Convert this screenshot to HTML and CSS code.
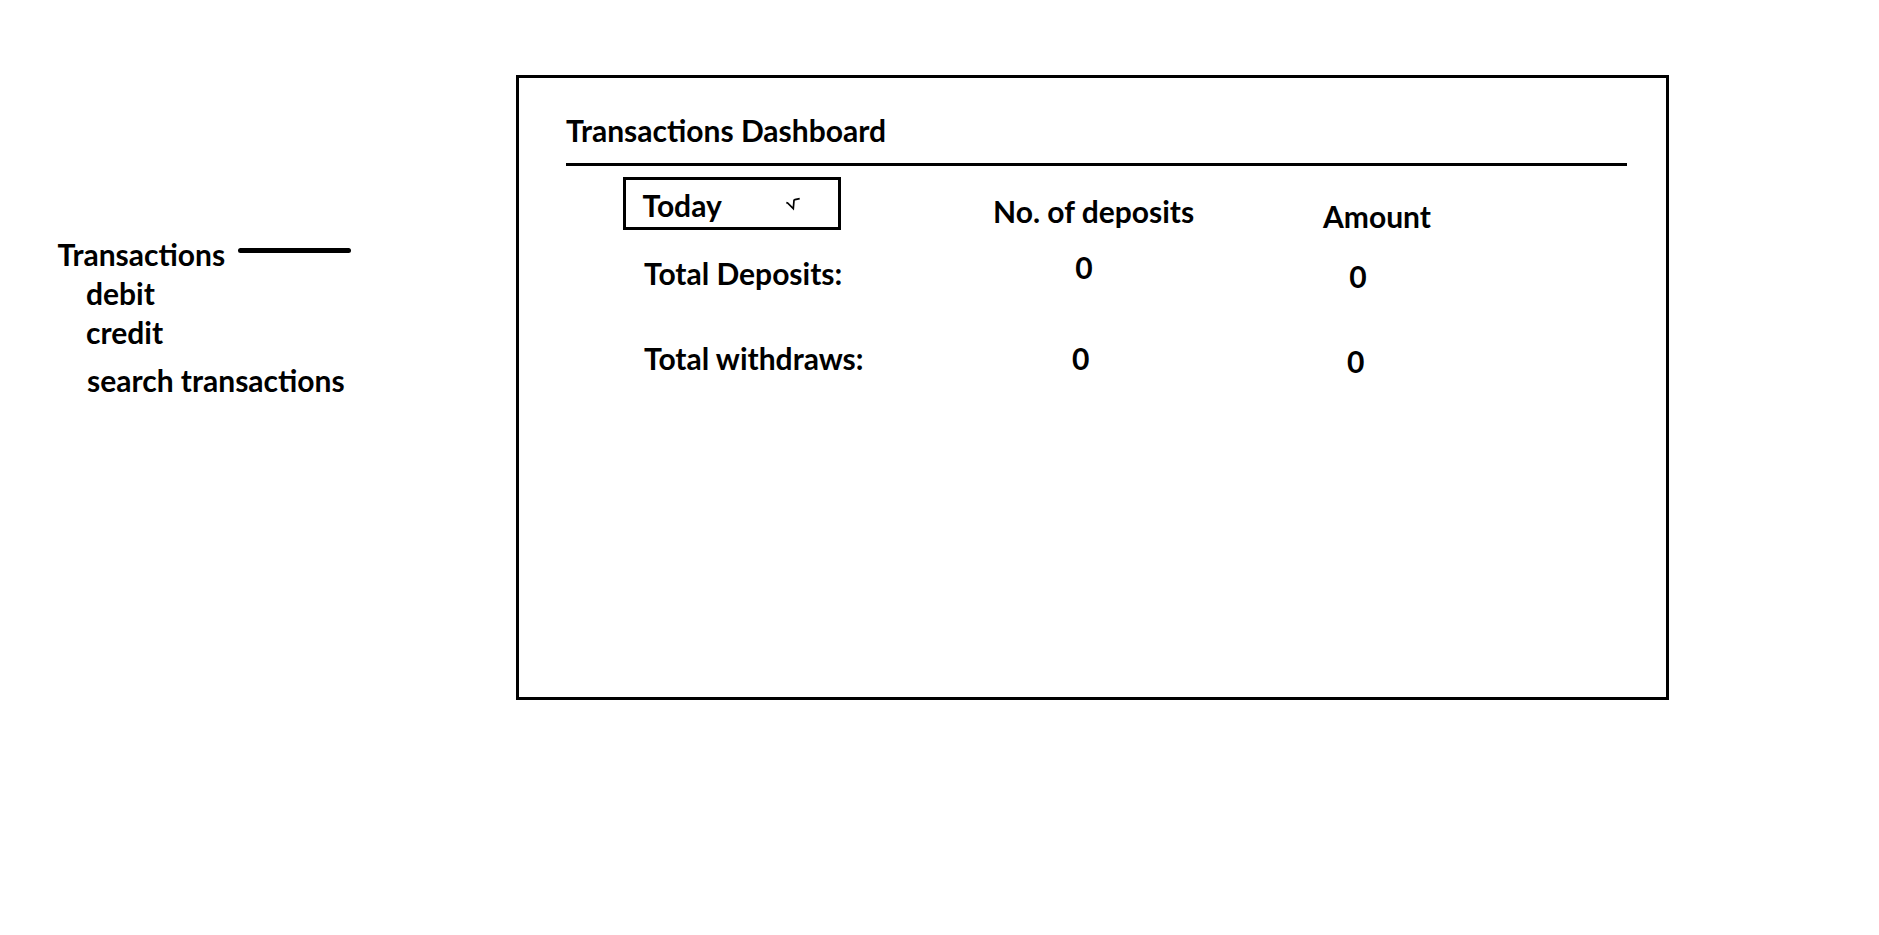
FILE: index.html
```html
<!DOCTYPE html>
<html lang="en">
<head>
<meta charset="utf-8">
<title>Transactions Dashboard</title>
<link rel="stylesheet" href="styles.css">
</head>
<body>
<div class="page">
  <nav class="sidebar">
    <div class="nav-title">
      <span class="nav-heading">Transactions</span>
      <span class="nav-bar"></span>
    </div>
    <div class="nav-item">debit</div>
    <div class="nav-item">credit</div>
    <div class="nav-item nav-search">search transactions</div>
  </nav>
  <main class="card">
    <h1 class="card-title">Transactions Dashboard</h1>
    <div class="stats">
      <div class="dropdown">
        <span class="dropdown-label">Today</span>
        <svg class="dropdown-check" width="16" height="14" viewBox="0 0 16 14" aria-hidden="true">
          <polyline points="1.3,5.6 2.6,6 8.3,11.7 9,3.3 10,2.6 14.7,1.7" fill="none" stroke="#000" stroke-width="1.7" stroke-linejoin="miter"/>
        </svg>
      </div>
      <div class="col-head head-count">No. of deposits</div>
      <div class="col-head head-amount">Amount</div>

      <div class="row-label label-dep">Total Deposits:</div>
      <div class="value v-dep-count">0</div>
      <div class="value v-dep-amount">0</div>

      <div class="row-label label-wd">Total withdraws:</div>
      <div class="value v-wd-count">0</div>
      <div class="value v-wd-amount">0</div>
    </div>
  </main>
</div>
</body>
</html>
```

FILE: styles.css
```css
* { box-sizing: border-box; }

html, body {
  margin: 0;
  padding: 0;
  background: #fff;
}

body {
  font-family: "Lato", "Open Sans", "Liberation Sans", sans-serif;
  font-weight: 700;
  color: #000;
  font-size: 30px;
  line-height: 1.2;
}

.page {
  display: flex;
  align-items: flex-start;
  padding: 75px 0 0 57.5px;
  width: 1879px;
  height: 935px;
}

/* ---------- sidebar ---------- */
.sidebar {
  flex: none;
  width: 458.5px;
  margin-top: 159.6px;
  line-height: 39px;
}

.nav-title {
  display: flex;
  align-items: flex-start;
}

.nav-bar {
  display: block;
  width: 113px;
  height: 5px;
  border-radius: 3px;
  background: #000;
  margin-top: 13.6px;
  margin-left: 13px;
}

.nav-item {
  padding-left: 28.5px;
}

.nav-search {
  padding-left: 29.5px;
  margin-top: 9px;
}

/* ---------- card ---------- */
.card {
  flex: none;
  width: 1153px;
  height: 625px;
  border: 3px solid #000;
  padding: 33.6px 39px 0 47px;
}

.card-title {
  margin: 0;
  font-size: 30px;
  font-weight: 700;
  line-height: 1.2;
  padding-bottom: 15.4px;
  border-bottom: 3px solid #000;
}

.stats {
  display: grid;
  grid-template-columns: 370px 330px 1fr;
  grid-template-rows: 53px 100px auto;
  margin-top: 11px;
  margin-left: 57px;
  line-height: 1.2;
}

.stats > * { align-self: start; }

.dropdown {
  display: flex;
  align-items: flex-start;
  width: 218px;
  height: 53px;
  border: 3px solid #000;
  padding: 7.2px 0 0 16.5px;
}

.dropdown-check {
  display: block;
  flex: none;
  margin-left: 63.5px;
  margin-top: 9.8px;
}

.head-count { margin-top: 15.6px; }
.head-amount { margin-top: 20.6px; }

.row-label { padding-left: 21px; }
.label-dep { margin-top: 24.6px; }
.label-wd { margin-top: 9.9px; }

.v-dep-count { margin: 18.9px 0 0 82.3px; }
.v-dep-amount { margin: 27.6px 0 0 26.3px; }
.v-wd-count { margin: 9.9px 0 0 78.9px; }
.v-wd-amount { margin: 12.6px 0 0 23.9px; }
```
